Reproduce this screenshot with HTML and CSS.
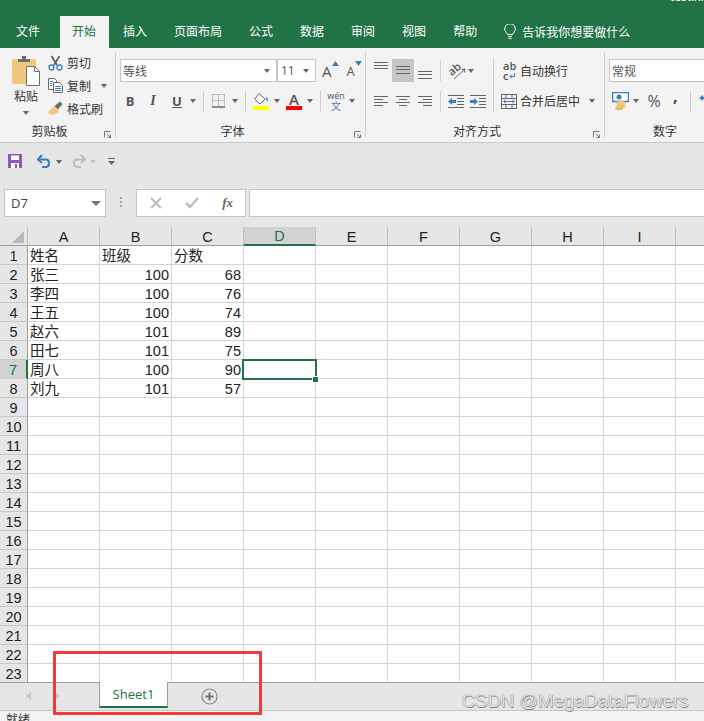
FILE: index.html
```html
<!DOCTYPE html>
<html lang="zh-CN">
<head>
    <meta charset="UTF-8">
    <title>test.xlsx - Excel</title>
    <link rel="stylesheet" href="styles.css">
</head>
<body>
<div class="app">
    <div class="titlebar"><span class="doc-name">test.xlsx</span></div>

    <div class="tabs">
        <span class="tab tab-file">文件</span>
        <span class="tab active">开始</span>
        <span class="tab">插入</span>
        <span class="tab">页面布局</span>
        <span class="tab">公式</span>
        <span class="tab">数据</span>
        <span class="tab">审阅</span>
        <span class="tab">视图</span>
        <span class="tab">帮助</span>
        <span class="tab tell">
            <svg width="12" height="16" viewBox="0 0 12 16" fill="none" stroke="#fff"><path d="M3.5 10.5C3 8.5.7 7.8.7 5a5.3 5.3 0 0 1 10.6 0c0 2.800-2.300 3.500-2.800 5.500z"/><path d="M4 12.500h4M4.500 14.500h3"/></svg>
            告诉我你想要做什么
        </span>
    </div>

    <div class="ribbon">
        <!-- clipboard -->
        <div class="group clip">
            <div class="rows clip-body">
                <div class="paste">
                    <svg width="30" height="32" viewBox="0 0 30 32">
                        <rect x="1" y="4" width="24" height="25" rx="2" fill="#efc77f"/>
                        <path d="M7 7V4h4V1h4v3h4v3z" fill="#6e6e6e"/>
                        <path d="M15.500 11.500h8l5 5v14h-13z" fill="#fff" stroke="#6e6e6e"/>
                        <path d="M23.500 11.500v5h5" fill="none" stroke="#6e6e6e"/>
                    </svg>
                    <span class="paste-label">粘贴</span>
                    <i class="caret"></i>
                </div>
                <div class="clip-list">
                    <div class="clip-item">
                        <svg width="15" height="16" viewBox="0 0 15 16" fill="none">
                            <path d="M3.500 1l5.500 9M11.500 1L6 10" stroke="#555" stroke-width="1.500"/>
                            <circle cx="3.500" cy="12.500" r="2.500" stroke="#3f7cbf" stroke-width="1.300"/>
                            <circle cx="11.500" cy="12.500" r="2.500" stroke="#3f7cbf" stroke-width="1.300"/>
                        </svg>
                        <span>剪切</span>
                    </div>
                    <div class="clip-item">
                        <svg width="15" height="15" viewBox="0 0 15 15" fill="#fff" stroke="#666">
                            <path d="M.5.500h6l2 2v9h-8z"/>
                            <path d="M5.500 4.500h6l3 3v7h-9z"/>
                            <path d="M7 8.500h6M7 10.500h6M7 12.500h6M2 3.500h3M2 5.500h2M2 7.500h2" stroke="#3f7cbf"/>
                        </svg>
                        <span>复制</span>
                        <i class="caret ml6"></i>
                    </div>
                    <div class="clip-item">
                        <svg width="15" height="15" viewBox="0 0 15 15">
                            <path d="M0 11l6-6 5 5c-2 3-5 4-8 4z" fill="#efc77f"/>
                            <path d="M6.500 5L12 .5l2.500 2.500L10 8.500z" fill="#6e6e6e"/>
                        </svg>
                        <span>格式刷</span>
                    </div>
                </div>
            </div>
            <div class="group-label"><span class="label-text">剪贴板</span><svg class="launcher" width="7" height="7" viewBox="0 0 7 7" fill="none" stroke="#777"><path d="M.5 6.500v-6h6M3 3l3.500 3.500M6.500 3.500v3h-3"/></svg></div>
        </div>
        <div class="vsep"></div>

        <!-- font -->
        <div class="group font-group">
            <div class="rows">
                <div class="row">
                    <div class="combo font-name ml4"><span>等线</span><i class="caret"></i></div>
                    <div class="combo font-size"><span>11</span><i class="caret"></i></div>
                    <span class="grow ml6">A<svg width="7" height="5" viewBox="0 0 7 5"><path d="M0 5l3.500-5L7 5z" fill="#3f7cbf"/></svg></span>
                    <span class="shrink ml8">A<svg width="7" height="5" viewBox="0 0 7 5"><path d="M0 0l3.500 5L7 0z" fill="#3f7cbf"/></svg></span>
                </div>
                <div class="row row2">
                    <b class="glyph ml9">B</b>
                    <i class="glyph serif ml13">I</i>
                    <u class="glyph ml14">U</u>
                    <i class="caret ml8"></i>
                    <i class="sep ml7"></i>
                    <svg class="ml8" width="13" height="14" viewBox="0 0 13 14" fill="none">
                        <path d="M.5.500h12M.5 6.500h12M.5.500v12M6.500.500v12M12.500.500v12" stroke="#888" stroke-dasharray="1 1"/>
                        <path d="M0 13h13" stroke="#555" stroke-width="1.300"/>
                    </svg>
                    <i class="caret ml7"></i>
                    <i class="sep ml7"></i>
                    <svg class="ml7" width="16" height="18" viewBox="0 0 16 18">
                        <path d="M6 1.500l6 5.500-5 5-5.500-5z" fill="#fff" stroke="#666"/>
                        <path d="M13 5c2 1 2.500 3 1.500 4.500-1-.5-1.500-2-1.500-4.500z" fill="#3f7cbf"/>
                        <rect y="14" width="16" height="4" fill="#ffff00"/>
                    </svg>
                    <i class="caret ml5"></i>
                    <span class="font-color ml6">A</span>
                    <i class="caret ml5"></i>
                    <i class="sep ml7"></i>
                    <span class="wen ml7"><span class="wen-top">wén</span><span class="wen-bot">文</span></span>
                    <i class="caret ml5"></i>
                </div>
            </div>
            <div class="group-label"><span class="label-text">字体</span><svg class="launcher" width="7" height="7" viewBox="0 0 7 7" fill="none" stroke="#777"><path d="M.5 6.500v-6h6M3 3l3.500 3.500M6.500 3.500v3h-3"/></svg></div>
        </div>
        <div class="vsep"></div>

        <!-- alignment -->
        <div class="group align-group">
            <div class="rows align-rows">
                <div class="align-left">
                    <div class="row">
                        <svg class="ml8" width="14" height="23" viewBox="0 0 14 23" stroke="#666"><path d="M0 3.500h14M0 6.500h14M0 9.500h14"/></svg>
                        <span class="align-on ml4"><svg width="14" height="23" viewBox="0 0 14 23" stroke="#666"><path d="M0 7.500h14M0 10.500h14M0 14.500h14"/></svg></span>
                        <svg class="ml4" width="14" height="23" viewBox="0 0 14 23" stroke="#666"><path d="M0 12.500h14M0 15.500h14M0 19.500h14"/></svg>
                        <i class="sep ml8"></i>
                        <svg class="orient ml7" width="17" height="18" viewBox="0 0 17 18">
                            <text x="0" y="12" transform="rotate(-40 5 8)" class="orient-text">ab</text>
                            <path d="M6 17L17 7M17 7l-3.500 .5M17 7l-.5 3.500" fill="none" stroke="#666"/>
                        </svg>
                        <i class="caret ml3"></i>
                    </div>
                    <div class="row row2">
                        <svg class="ml8" width="14" height="22" viewBox="0 0 14 22" stroke="#666"><path d="M0 6.500h14M0 9.500h9M0 12.500h14M0 15.500h9"/></svg>
                        <svg class="ml8" width="14" height="22" viewBox="0 0 14 22" stroke="#666"><path d="M0 6.500h14M3 9.500h8M0 12.500h14M3 15.500h8"/></svg>
                        <svg class="ml8" width="14" height="22" viewBox="0 0 14 22" stroke="#666"><path d="M0 6.500h14M5 9.500h9M0 12.500h14M5 15.500h9"/></svg>
                        <i class="sep ml8"></i>
                        <svg class="ml7" width="16" height="22" viewBox="0 0 16 22">
                            <path d="M0 5.500h16M9 8.500h7M9 11.500h7M9 14.500h7M0 17.500h16" stroke="#666"/>
                            <path d="M0 11.500l4-3.500v2h4v3H4v2z" fill="#3f7cbf"/>
                        </svg>
                        <svg class="ml6" width="16" height="22" viewBox="0 0 16 22">
                            <path d="M0 5.500h16M9 8.500h7M9 11.500h7M9 14.500h7M0 17.500h16" stroke="#666"/>
                            <path d="M8 11.500l-4-3.500v2H0v3h4v2z" fill="#3f7cbf"/>
                        </svg>
                    </div>
                </div>
                <i class="sep-tall"></i>
                <div class="align-right">
                    <div class="row">
                        <span class="abc ml9">
                            <span class="abc-line">ab</span>
                            <span class="abc-line">c<svg width="6" height="6" viewBox="0 0 6 6" fill="none" stroke="#3f7cbf"><path d="M5.500 0v3.500H1M3 1.500l-2 2 2 2"/></svg></span>
                        </span>
                        <span class="cmd ml3">自动换行</span>
                    </div>
                    <div class="row row2">
                        <svg class="ml7" width="16" height="15" viewBox="0 0 16 15" fill="none" stroke="#666">
                            <rect x=".5" y=".5" width="15" height="14"/>
                            <path d="M0 4.500h16M0 10.500h16M5 .5v4M11 .5v4M5 10.500v4M11 10.500v4"/>
                            <path d="M2.500 7.500h11M2.500 7.500l2-1.500M2.500 7.500l2 1.500M13.500 7.500l-2-1.500M13.500 7.500l-2 1.500" stroke="#3f7cbf"/>
                        </svg>
                        <span class="cmd ml3">合并后居中</span>
                        <i class="caret ml9"></i>
                    </div>
                </div>
            </div>
            <div class="group-label"><span class="label-text">对齐方式</span><svg class="launcher" width="7" height="7" viewBox="0 0 7 7" fill="none" stroke="#777"><path d="M.5 6.500v-6h6M3 3l3.500 3.500M6.500 3.500v3h-3"/></svg></div>
        </div>
        <div class="vsep"></div>

        <!-- number -->
        <div class="group number-group">
            <div class="rows">
                <div class="row">
                    <div class="combo number-format ml4"><span>常规</span></div>
                </div>
                <div class="row row2">
                    <svg class="ml7" width="17" height="18" viewBox="0 0 17 18">
                        <rect x=".5" y=".5" width="16" height="9" fill="#fff" stroke="#3f7cbf" stroke-width="1.500"/>
                        <circle cx="7" cy="5" r="2.500" fill="#3f7cbf"/>
                        <ellipse cx="9" cy="11" rx="5" ry="2" fill="#efc77f"/>
                        <ellipse cx="9" cy="14" rx="5" ry="2" fill="#efc77f"/>
                        <ellipse cx="7" cy="16.500" rx="4" ry="1.500" fill="#e9b560"/>
                    </svg>
                    <i class="caret ml4"></i>
                    <span class="percent ml8">%</span>
                    <b class="comma ml12">,</b>
                    <i class="sep ml9"></i>
                    <svg class="ml8" width="12" height="14" viewBox="0 0 12 14"><path d="M0 4l4-3v2h4v2H4v2z" fill="#3f7cbf"/></svg>
                </div>
            </div>
            <div class="group-label"><span class="label-text number-label">数字</span></div>
        </div>
    </div>

    <div class="qat">
        <svg class="ml8" width="14" height="14" viewBox="0 0 14 14">
            <path d="M0 0h14v14H0z" fill="#8e5ab5"/>
            <rect x="3" y="1.500" width="8" height="4.500" fill="#fff"/>
            <rect x="3" y="9" width="8" height="5" fill="#fff"/>
            <rect x="7" y="10" width="2" height="4" fill="#8e5ab5"/>
        </svg>
        <svg class="ml15" width="15" height="14" viewBox="0 0 15 14" fill="none" stroke="#3f7cbf" stroke-width="2">
            <path d="M1 5.500h8.500a4 4 0 0 1 0 7.500H5"/>
            <path d="M5 1L1 5.500 5 9"/>
        </svg>
        <i class="caret ml4 qat-caret"></i>
        <svg class="ml9" width="15" height="14" viewBox="0 0 15 14" fill="none" stroke="#bdbdbd" stroke-width="2">
            <path d="M14 5.500H5.500a4 4 0 0 0 0 7.500H10"/>
            <path d="M10 1l4 4.500L10 9"/>
        </svg>
        <i class="caret caret-off ml4 qat-caret"></i>
        <svg class="ml12 qat-more" width="7" height="8" viewBox="0 0 7 8"><path d="M0 .5h7" stroke="#666"/><path d="M0 3h7L3.500 7z" fill="#666"/></svg>
    </div>

    <div class="formula-bar">
        <div class="name-box"><span>D7</span><i class="caret caret-big"></i></div>
        <span class="grip"></span>
        <div class="fx-box">
            <svg width="12" height="12" viewBox="0 0 12 12" stroke="#bdbdbd" stroke-width="2"><path d="M1 1l10 10M11 1L1 11"/></svg>
            <svg width="14" height="12" viewBox="0 0 14 12" fill="none" stroke="#bdbdbd" stroke-width="2.500"><path d="M1 6l4 4 8-9"/></svg>
            <span class="fx">fx</span>
        </div>
        <div class="formula-input"></div>
    </div>

    <div class="sheet-wrap">
        <table class="sheet">
            <colgroup>
                <col class="col-head">
                <col><col><col><col><col><col><col><col><col><col>
            </colgroup>
            <thead>
                <tr>
                    <th class="corner"><svg width="12" height="12" viewBox="0 0 12 12"><path d="M0 12L12 0v12z" fill="#b9b9b9"/></svg></th>
                    <th>A</th><th>B</th><th>C</th><th class="on">D</th><th>E</th><th>F</th><th>G</th><th>H</th><th>I</th><th></th>
                </tr>
            </thead>
            <tbody>
                <tr><th>1</th><td>姓名</td><td>班级</td><td>分数</td><td></td><td></td><td></td><td></td><td></td><td></td><td></td></tr>
                <tr><th>2</th><td>张三</td><td class="num">100</td><td class="num">68</td><td></td><td></td><td></td><td></td><td></td><td></td><td></td></tr>
                <tr><th>3</th><td>李四</td><td class="num">100</td><td class="num">76</td><td></td><td></td><td></td><td></td><td></td><td></td><td></td></tr>
                <tr><th>4</th><td>王五</td><td class="num">100</td><td class="num">74</td><td></td><td></td><td></td><td></td><td></td><td></td><td></td></tr>
                <tr><th>5</th><td>赵六</td><td class="num">101</td><td class="num">89</td><td></td><td></td><td></td><td></td><td></td><td></td><td></td></tr>
                <tr><th>6</th><td>田七</td><td class="num">101</td><td class="num">75</td><td></td><td></td><td></td><td></td><td></td><td></td><td></td></tr>
                <tr><th class="on-row">7</th><td>周八</td><td class="num">100</td><td class="num">90</td><td class="selected"></td><td></td><td></td><td></td><td></td><td></td><td></td></tr>
                <tr><th>8</th><td>刘九</td><td class="num">101</td><td class="num">57</td><td></td><td></td><td></td><td></td><td></td><td></td><td></td></tr>
                <tr><th>9</th><td></td><td></td><td></td><td></td><td></td><td></td><td></td><td></td><td></td><td></td></tr>
                <tr><th>10</th><td></td><td></td><td></td><td></td><td></td><td></td><td></td><td></td><td></td><td></td></tr>
                <tr><th>11</th><td></td><td></td><td></td><td></td><td></td><td></td><td></td><td></td><td></td><td></td></tr>
                <tr><th>12</th><td></td><td></td><td></td><td></td><td></td><td></td><td></td><td></td><td></td><td></td></tr>
                <tr><th>13</th><td></td><td></td><td></td><td></td><td></td><td></td><td></td><td></td><td></td><td></td></tr>
                <tr><th>14</th><td></td><td></td><td></td><td></td><td></td><td></td><td></td><td></td><td></td><td></td></tr>
                <tr><th>15</th><td></td><td></td><td></td><td></td><td></td><td></td><td></td><td></td><td></td><td></td></tr>
                <tr><th>16</th><td></td><td></td><td></td><td></td><td></td><td></td><td></td><td></td><td></td><td></td></tr>
                <tr><th>17</th><td></td><td></td><td></td><td></td><td></td><td></td><td></td><td></td><td></td><td></td></tr>
                <tr><th>18</th><td></td><td></td><td></td><td></td><td></td><td></td><td></td><td></td><td></td><td></td></tr>
                <tr><th>19</th><td></td><td></td><td></td><td></td><td></td><td></td><td></td><td></td><td></td><td></td></tr>
                <tr><th>20</th><td></td><td></td><td></td><td></td><td></td><td></td><td></td><td></td><td></td><td></td></tr>
                <tr><th>21</th><td></td><td></td><td></td><td></td><td></td><td></td><td></td><td></td><td></td><td></td></tr>
                <tr><th>22</th><td></td><td></td><td></td><td></td><td></td><td></td><td></td><td></td><td></td><td></td></tr>
                <tr><th>23</th><td></td><td></td><td></td><td></td><td></td><td></td><td></td><td></td><td></td><td></td></tr>
            </tbody>
        </table>
    </div>

    <div class="sheet-tabs">
        <i class="arrow arrow-left"></i>
        <i class="arrow arrow-right"></i>
        <span class="sheet-tab">Sheet1</span>
        <svg class="add-sheet" width="17" height="17" viewBox="0 0 17 17" fill="none">
            <circle cx="8.500" cy="8.500" r="7.500" stroke="#8a8a8a" stroke-width="1.200"/>
            <path d="M8.500 4.500v8M4.500 8.500h8" stroke="#6e6e6e" stroke-width="2"/>
        </svg>
    </div>

    <div class="statusbar">就绪</div>

    <!-- annotation and watermark sit on top of the screenshot -->
    <div class="red-box"></div>
    <div class="watermark">CSDN @MegaDataFlowers</div>
</div>
</body>
</html>
```
FILE: styles.css
```css
*, *::before, *::after {
    box-sizing: border-box;
}

html, body {
    margin: 0;
    padding: 0;
    overflow: hidden;
}

body {
    font-family: "Open Sans", "Noto Sans CJK SC", sans-serif;
    font-size: 12px;
    color: #444;
}

i {
    font-style: normal;
}

.app {
    position: relative;
    width: 704px;
    height: 721px;
    overflow: hidden;
    display: flex;
    flex-direction: column;
    background: #e6e6e6;
}

/* spacing helpers */
.ml3 { margin-left: 3px; }
.ml4 { margin-left: 4px; }
.ml5 { margin-left: 5px; }
.ml6 { margin-left: 6px; }
.ml7 { margin-left: 7px; }
.ml8 { margin-left: 8px; }
.ml9 { margin-left: 9px; }
.ml12 { margin-left: 12px; }
.ml13 { margin-left: 13px; }
.ml14 { margin-left: 14px; }
.ml15 { margin-left: 15px; }

/* title + tabs */
.titlebar {
    height: 16px;
    flex: none;
    background: #217346;
    display: flex;
    justify-content: flex-end;
    overflow: hidden;
}

.doc-name {
    color: #fff;
    line-height: 14px;
    margin-top: -10px;
    width: 34px;
    white-space: nowrap;
}

.tabs {
    height: 32px;
    flex: none;
    background: #217346;
    display: flex;
    gap: 2px;
    padding-left: 3.5px;
    color: #fff;
}

.tab {
    padding: 0 12.5px;
    line-height: 31px;
    white-space: nowrap;
}

.tab-file {
    margin-right: 5px;
}

.tab.active {
    background: #f3f3f3;
    color: #217346;
}

.tell {
    display: flex;
    align-items: center;
    gap: 6px;
}

/* ribbon */
.ribbon {
    height: 95px;
    flex: none;
    background: #f3f3f3;
    border-bottom: 1px solid #c8c8c8;
    display: flex;
    align-items: flex-start;
    overflow: hidden;
}

.vsep {
    width: 1px;
    height: 85px;
    margin-top: 4px;
    flex: none;
    background: #cfcfcf;
}

.group {
    height: 94px;
    flex: none;
    padding-top: 11px;
    padding-bottom: 1px;
    display: flex;
    flex-direction: column;
}

.clip { width: 115px; }
.font-group { width: 249px; }
.align-group { width: 238px; }
.number-group { width: 120px; }

.rows {
    height: 53px;
}

.row {
    height: 23px;
    display: flex;
    align-items: center;
    flex: none;
}

.row2 {
    height: 22px;
    margin-top: 8px;
}

.group-label {
    margin-top: auto;
    height: 18px;
    line-height: 18px;
    display: grid;
    grid-template-columns: 1fr auto 1fr;
    align-items: center;
    color: #333;
}

.label-text {
    grid-column: 2;
    margin-right: 16px;
}

.launcher {
    grid-column: 3;
    justify-self: end;
    margin-right: 4px;
    margin-top: 5px;
}

.number-label {
    margin-right: 0;
}

.caret {
    display: inline-block;
    width: 0;
    height: 0;
    flex: none;
    box-sizing: content-box;
    border-left: 3.5px solid transparent;
    border-right: 3.5px solid transparent;
    border-top: 4px solid #666;
}

.caret-off {
    border-top-color: #c4c4c4;
}

.caret-big {
    border-left-width: 5px;
    border-right-width: 5px;
    border-top-width: 5px;
    border-top-color: #777;
}

.sep {
    width: 1px;
    height: 21px;
    flex: none;
    background: #cfcfcf;
}

/* clipboard */
.clip-body {
    display: flex;
}

.paste {
    margin-left: 11px;
    width: 30px;
    margin-top: -4px;
    display: flex;
    flex-direction: column;
    align-items: center;
    height: 60px;
}

.paste-label {
    line-height: 16px;
    margin-top: 2px;
    color: #333;
}

.paste .caret {
    margin-top: 6px;
}

.clip-list {
    margin-left: 7px;
    margin-top: -8px;
}

.clip-item {
    height: 23px;
    display: flex;
    align-items: center;
    gap: 4px;
    color: #333;
}

/* font */
.combo {
    height: 23px;
    flex: none;
    background: #fff;
    border: 1px solid #c6c6c6;
    display: flex;
    align-items: center;
    justify-content: space-between;
    padding: 0 6px 0 2px;
    color: #555;
}

.font-name { width: 157px; }
.font-size { width: 39px; padding-left: 3px; }
.number-format { width: 120px; }

.grow, .shrink {
    display: inline-flex;
    align-items: flex-start;
    font-size: 15px;
    line-height: 20px;
    color: #555;
}

.shrink {
    font-size: 13px;
}

.glyph {
    width: 10px;
    text-align: center;
    flex: none;
    font-size: 13px;
    color: #555;
    line-height: 16px;
}

.serif {
    font-family: "Liberation Serif", serif;
    font-weight: bold;
    font-style: italic;
    font-size: 14px;
}

u.glyph {
    font-weight: bold;
}

.font-color {
    width: 16px;
    height: 18px;
    flex: none;
    text-align: center;
    font-size: 15px;
    font-weight: 600;
    line-height: 14px;
    color: #555;
    border-bottom: 4px solid #ff0000;
}

.wen {
    width: 16px;
    flex: none;
    display: flex;
    flex-direction: column;
    align-items: center;
}

.wen-top {
    font-size: 9px;
    line-height: 9px;
    margin-bottom: 1px;
    color: #555;
    white-space: nowrap;
}

.wen-bot {
    font-size: 10px;
    line-height: 10px;
    color: #3f7cbf;
}

/* alignment */
.align-rows {
    display: flex;
}

.align-left {
    width: 127px;
    flex: none;
}

.align-right {
    flex: 1;
}

.sep-tall {
    width: 1px;
    height: 55px;
    margin-top: -1px;
    flex: none;
    background: #cfcfcf;
}

.align-on {
    width: 22px;
    height: 23px;
    background: #c6c6c6;
    display: flex;
    justify-content: center;
}

.orient {
    overflow: visible;
}

.orient-text {
    font-size: 11px;
    font-weight: 600;
    fill: #555;
}

.abc {
    width: 14px;
    flex: none;
    display: flex;
    flex-direction: column;
}

.abc-line {
    display: flex;
    align-items: center;
    gap: 1px;
    font-size: 11px;
    line-height: 10px;
    height: 10px;
    color: #555;
    font-weight: 600;
}

.cmd {
    color: #333;
    white-space: nowrap;
}

/* number */
.percent {
    width: 14px;
    flex: none;
    font-size: 16px;
    color: #555;
    text-align: center;
}

.comma {
    width: 8px;
    flex: none;
    font-size: 16px;
    color: #444;
    line-height: 12px;
    margin-top: -11px;
}

/* quick access */
.qat {
    height: 46px;
    flex: none;
    display: flex;
    align-items: flex-start;
    padding-top: 11px;
}

.qat-caret {
    margin-top: 6px;
}

.qat-more {
    margin-top: 4px;
}

/* formula bar */
.formula-bar {
    height: 38px;
    flex: none;
    padding: 0 0 10px 4px;
    display: flex;
    align-items: stretch;
}

.name-box {
    width: 102px;
    background: #fff;
    border: 1px solid #c6c6c6;
    display: flex;
    align-items: center;
    justify-content: space-between;
    padding: 0 4px 0 6px;
    font-size: 13px;
    color: #444;
}

.grip {
    width: 2px;
    height: 12px;
    margin: 8px 14px 0 14px;
    background-image: linear-gradient(#a8a8a8 50%, transparent 50%);
    background-size: 2px 4px;
}

.fx-box {
    width: 110px;
    background: #fff;
    border: 1px solid #c6c6c6;
    display: flex;
    align-items: center;
    padding: 0 12px 0 13px;
    justify-content: space-between;
}

.fx {
    font-family: "Liberation Serif", serif;
    font-style: italic;
    font-weight: bold;
    font-size: 13px;
    color: #666;
}

.formula-input {
    flex: 1;
    margin-left: 3px;
    background: #fff;
    border: 1px solid #c6c6c6;
    border-right: none;
}

/* grid */
.sheet-wrap {
    height: 455px;
    flex: none;
    overflow: hidden;
    background: #fff;
}

.sheet {
    table-layout: fixed;
    width: 748px;
    border-collapse: separate;
    border-spacing: 0;
    font-family: "Liberation Sans", "Noto Sans CJK SC", sans-serif;
    font-size: 14.500px;
    color: #222;
}

.sheet col {
    width: 72px;
}

.sheet col.col-head {
    width: 28px;
}

.sheet th, .sheet td {
    height: 19px;
    padding: 2px 0 0;
    border-right: 1px solid #d4d4d4;
    border-bottom: 1px solid #d4d4d4;
    line-height: 16px;
    font-weight: normal;
    white-space: nowrap;
    overflow: hidden;
}

.sheet th {
    background: #e6e6e6;
    text-align: center;
    border-bottom-color: #c8c8c8;
}

.sheet thead th {
    line-height: 15px;
    border-bottom-color: #9e9e9e;
    border-right-color: #c0c0c0;
}

.sheet tbody th {
    border-right-color: #9e9e9e;
}

.sheet thead th.on {
    background: #d2d2d2;
    color: #217346;
    border-bottom: 2px solid #217346;
}

.sheet tbody th.on-row {
    background: #d2d2d2;
    color: #217346;
    border-right: 2px solid #217346;
}

.sheet .corner {
    text-align: right;
    padding: 0 3px 2px 0;
    line-height: 0;
    vertical-align: bottom;
}

.sheet td {
    padding: 2px 2px 0;
    background: #fff;
}

.sheet .num {
    text-align: right;
}

.sheet tbody tr:last-child th, .sheet tbody tr:last-child td {
    height: 18px;
    border-bottom: none;
}

.sheet td.selected {
    position: relative;
    overflow: visible;
}

.sheet td.selected::before {
    content: "";
    position: absolute;
    left: -2px;
    top: -1px;
    width: 75px;
    height: 21px;
    border: 2px solid #217346;
}

.sheet td.selected::after {
    content: "";
    position: absolute;
    left: 68px;
    top: 16px;
    width: 7px;
    height: 7px;
    background: #217346;
    border: 1px solid #fff;
}

/* sheet tabs */
.sheet-tabs {
    height: 29px;
    flex: none;
    background: #e6e6e6;
    border-top: 1px solid #9e9e9e;
    border-bottom: 1px solid #c8c8c8;
    display: flex;
    align-items: flex-start;
}

.arrow {
    width: 0;
    height: 0;
    flex: none;
    box-sizing: content-box;
    margin-top: 9px;
    border-top: 4.500px solid transparent;
    border-bottom: 4.500px solid transparent;
}

.arrow-left {
    margin-left: 26px;
    border-right: 5px solid #c4c4c4;
}

.arrow-right {
    margin-left: 24px;
    border-left: 5px solid #c4c4c4;
}

.sheet-tab {
    width: 69px;
    height: 26px;
    margin-left: 39px;
    margin-top: -1px;
    flex: none;
    background: #fff;
    border-left: 1px solid #9e9e9e;
    border-right: 1px solid #9e9e9e;
    border-bottom: 2px solid #217346;
    text-align: center;
    font-size: 13px;
    line-height: 24px;
    color: #217346;
}

.add-sheet {
    margin-left: 33px;
    margin-top: 5px;
    flex: none;
}

.statusbar {
    flex: 1;
    background: #f3f3f3;
    padding-left: 6px;
    line-height: 16px;
    padding-top: 1px;
    overflow: hidden;
    color: #333;
}

/* overlays */
.red-box {
    position: absolute;
    left: 53px;
    top: 651px;
    width: 209px;
    height: 64px;
    border: 3px solid #f33a3a;
}

.watermark {
    position: absolute;
    left: 462px;
    top: 690px;
    font-family: "Liberation Sans", sans-serif;
    font-size: 18.500px;
    line-height: 22px;
    white-space: nowrap;
    color: #e2e2e2;
    text-shadow: 0.5px 0.5px 0 #888, -0.5px -0.5px 0 #999;
}
```
